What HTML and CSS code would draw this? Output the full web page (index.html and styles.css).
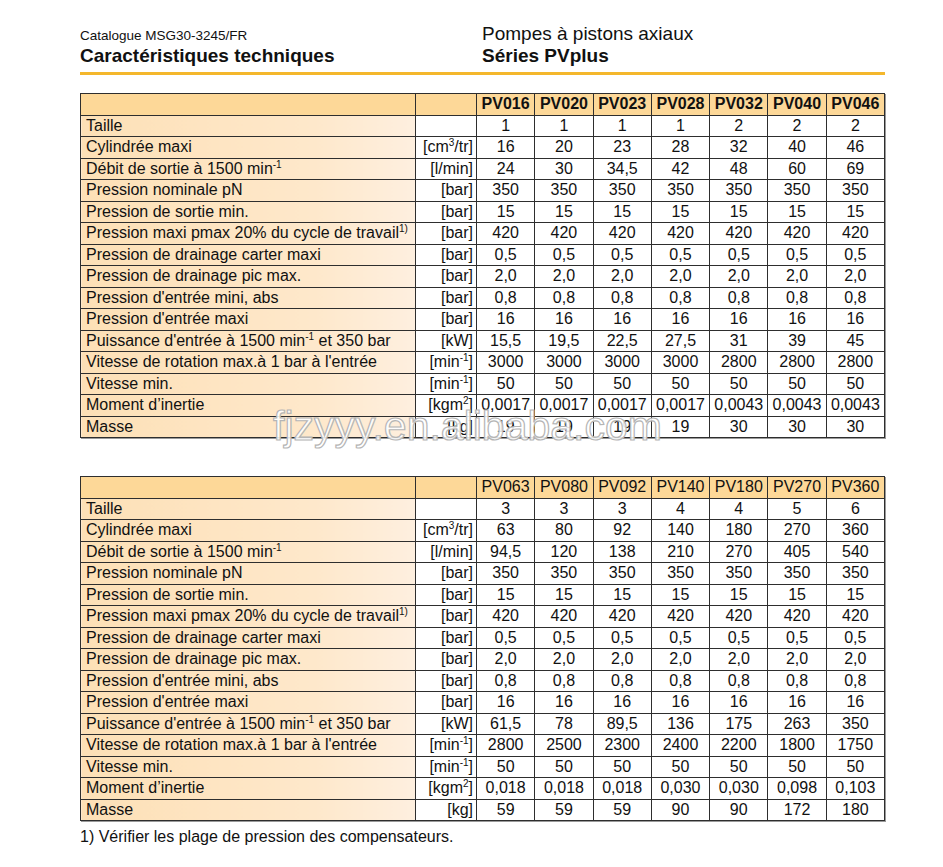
FILE: index.html
```html
<!DOCTYPE html>
<html lang="fr">
<head>
<meta charset="utf-8">
<title>Caractéristiques techniques</title>
<link rel="stylesheet" href="styles.css">
</head>
<body>
<div class="page">
  <header class="head">
    <div class="cat">Catalogue MSG30-3245/FR</div>
    <div class="sub">Pompes à pistons axiaux</div>
    <div class="title">Caractéristiques techniques</div>
    <div class="title">Séries PVplus</div>
  </header>

  <div class="tablewrap">
    <table class="spec bold-head">
      <colgroup><col class="c-label"><col class="c-unit"><col><col><col><col><col><col><col></colgroup>
      <thead>
        <tr><th class="label"></th><th class="unit"></th><th>PV016</th><th>PV020</th><th>PV023</th><th>PV028</th><th>PV032</th><th>PV040</th><th>PV046</th></tr>
      </thead>
      <tbody>
        <tr><td class="label">Taille</td><td class="unit"></td><td>1</td><td>1</td><td>1</td><td>1</td><td>2</td><td>2</td><td>2</td></tr>
        <tr><td class="label">Cylindrée maxi</td><td class="unit">[cm<sup>3</sup>/tr]</td><td>16</td><td>20</td><td>23</td><td>28</td><td>32</td><td>40</td><td>46</td></tr>
        <tr><td class="label">Débit de sortie à 1500 min<sup>-1</sup></td><td class="unit">[l/min]</td><td>24</td><td>30</td><td>34,5</td><td>42</td><td>48</td><td>60</td><td>69</td></tr>
        <tr><td class="label">Pression nominale pN</td><td class="unit">[bar]</td><td>350</td><td>350</td><td>350</td><td>350</td><td>350</td><td>350</td><td>350</td></tr>
        <tr><td class="label">Pression de sortie min.</td><td class="unit">[bar]</td><td>15</td><td>15</td><td>15</td><td>15</td><td>15</td><td>15</td><td>15</td></tr>
        <tr><td class="label">Pression maxi pmax 20% du cycle de travail<sup>1)</sup></td><td class="unit">[bar]</td><td>420</td><td>420</td><td>420</td><td>420</td><td>420</td><td>420</td><td>420</td></tr>
        <tr><td class="label">Pression de drainage carter maxi</td><td class="unit">[bar]</td><td>0,5</td><td>0,5</td><td>0,5</td><td>0,5</td><td>0,5</td><td>0,5</td><td>0,5</td></tr>
        <tr><td class="label">Pression de drainage pic max.</td><td class="unit">[bar]</td><td>2,0</td><td>2,0</td><td>2,0</td><td>2,0</td><td>2,0</td><td>2,0</td><td>2,0</td></tr>
        <tr><td class="label">Pression d'entrée mini, abs</td><td class="unit">[bar]</td><td>0,8</td><td>0,8</td><td>0,8</td><td>0,8</td><td>0,8</td><td>0,8</td><td>0,8</td></tr>
        <tr><td class="label">Pression d'entrée maxi</td><td class="unit">[bar]</td><td>16</td><td>16</td><td>16</td><td>16</td><td>16</td><td>16</td><td>16</td></tr>
        <tr><td class="label">Puissance d'entrée à 1500 min<sup>-1</sup> et 350 bar</td><td class="unit">[kW]</td><td>15,5</td><td>19,5</td><td>22,5</td><td>27,5</td><td>31</td><td>39</td><td>45</td></tr>
        <tr><td class="label">Vitesse de rotation max.à 1 bar à l'entrée</td><td class="unit">[min<sup>-1</sup>]</td><td>3000</td><td>3000</td><td>3000</td><td>3000</td><td>2800</td><td>2800</td><td>2800</td></tr>
        <tr><td class="label">Vitesse min.</td><td class="unit">[min<sup>-1</sup>]</td><td>50</td><td>50</td><td>50</td><td>50</td><td>50</td><td>50</td><td>50</td></tr>
        <tr><td class="label">Moment d’inertie</td><td class="unit">[kgm<sup>2</sup>]</td><td>0,0017</td><td>0,0017</td><td>0,0017</td><td>0,0017</td><td>0,0043</td><td>0,0043</td><td>0,0043</td></tr>
        <tr><td class="label">Masse</td><td class="unit">[kg]</td><td>19</td><td>19</td><td>19</td><td>19</td><td>30</td><td>30</td><td>30</td></tr>
      </tbody>
    </table>
    <div class="watermark">fjzyyy.en.alibaba.com</div>
  </div>

  <div class="tablewrap second">
    <table class="spec">
      <colgroup><col class="c-label"><col class="c-unit"><col><col><col><col><col><col><col></colgroup>
      <thead>
        <tr><th class="label"></th><th class="unit"></th><th>PV063</th><th>PV080</th><th>PV092</th><th>PV140</th><th>PV180</th><th>PV270</th><th>PV360</th></tr>
      </thead>
      <tbody>
        <tr><td class="label">Taille</td><td class="unit"></td><td>3</td><td>3</td><td>3</td><td>4</td><td>4</td><td>5</td><td>6</td></tr>
        <tr><td class="label">Cylindrée maxi</td><td class="unit">[cm<sup>3</sup>/tr]</td><td>63</td><td>80</td><td>92</td><td>140</td><td>180</td><td>270</td><td>360</td></tr>
        <tr><td class="label">Débit de sortie à 1500 min<sup>-1</sup></td><td class="unit">[l/min]</td><td>94,5</td><td>120</td><td>138</td><td>210</td><td>270</td><td>405</td><td>540</td></tr>
        <tr><td class="label">Pression nominale pN</td><td class="unit">[bar]</td><td>350</td><td>350</td><td>350</td><td>350</td><td>350</td><td>350</td><td>350</td></tr>
        <tr><td class="label">Pression de sortie min.</td><td class="unit">[bar]</td><td>15</td><td>15</td><td>15</td><td>15</td><td>15</td><td>15</td><td>15</td></tr>
        <tr><td class="label">Pression maxi pmax 20% du cycle de travail<sup>1)</sup></td><td class="unit">[bar]</td><td>420</td><td>420</td><td>420</td><td>420</td><td>420</td><td>420</td><td>420</td></tr>
        <tr><td class="label">Pression de drainage carter maxi</td><td class="unit">[bar]</td><td>0,5</td><td>0,5</td><td>0,5</td><td>0,5</td><td>0,5</td><td>0,5</td><td>0,5</td></tr>
        <tr><td class="label">Pression de drainage pic max.</td><td class="unit">[bar]</td><td>2,0</td><td>2,0</td><td>2,0</td><td>2,0</td><td>2,0</td><td>2,0</td><td>2,0</td></tr>
        <tr><td class="label">Pression d'entrée mini, abs</td><td class="unit">[bar]</td><td>0,8</td><td>0,8</td><td>0,8</td><td>0,8</td><td>0,8</td><td>0,8</td><td>0,8</td></tr>
        <tr><td class="label">Pression d'entrée maxi</td><td class="unit">[bar]</td><td>16</td><td>16</td><td>16</td><td>16</td><td>16</td><td>16</td><td>16</td></tr>
        <tr><td class="label">Puissance d'entrée à 1500 min<sup>-1</sup> et 350 bar</td><td class="unit">[kW]</td><td>61,5</td><td>78</td><td>89,5</td><td>136</td><td>175</td><td>263</td><td>350</td></tr>
        <tr><td class="label">Vitesse de rotation max.à 1 bar à l'entrée</td><td class="unit">[min<sup>-1</sup>]</td><td>2800</td><td>2500</td><td>2300</td><td>2400</td><td>2200</td><td>1800</td><td>1750</td></tr>
        <tr><td class="label">Vitesse min.</td><td class="unit">[min<sup>-1</sup>]</td><td>50</td><td>50</td><td>50</td><td>50</td><td>50</td><td>50</td><td>50</td></tr>
        <tr><td class="label">Moment d’inertie</td><td class="unit">[kgm<sup>2</sup>]</td><td>0,018</td><td>0,018</td><td>0,018</td><td>0,030</td><td>0,030</td><td>0,098</td><td>0,103</td></tr>
        <tr><td class="label">Masse</td><td class="unit">[kg]</td><td>59</td><td>59</td><td>59</td><td>90</td><td>90</td><td>172</td><td>180</td></tr>
      </tbody>
    </table>
  </div>

  <p class="note">1) Vérifier les plage de pression des compensateurs.</p>
</div>
</body>
</html>
```

FILE: styles.css
```css
* { box-sizing: border-box; }

body {
  margin: 0;
  background: #ffffff;
  color: #111111;
  font-family: "Liberation Sans", Arial, sans-serif;
}

.page {
  width: 943px;
  padding: 24px 0 0 80px;
}

.head {
  display: grid;
  grid-template-columns: 402px 403px;
  align-items: baseline;
  width: 805px;
  padding-bottom: 6px;
  border-bottom: 3px solid #f4b72c;
}

.cat {
  font-size: 13.5px;
  line-height: 20px;
}

.sub {
  font-size: 19px;
  line-height: 20px;
}

.title {
  font-size: 19px;
  line-height: 20px;
  font-weight: bold;
}

.tablewrap {
  position: relative;
  width: 805px;
  margin-top: 18px;
}

.tablewrap.second {
  margin-top: 38px;
}

.spec {
  width: 805px;
  table-layout: fixed;
  border-collapse: collapse;
  font-size: 16px;
  box-shadow: 1px 1px 0 #9a9a9a;
}

.c-label { width: 335px; }
.c-unit { width: 61px; }

.spec tr { height: 21.5px; }

.spec th,
.spec td {
  border: 1px solid #2e2e2e;
  padding: 0;
  line-height: 18px;
  text-align: center;
  white-space: nowrap;
  vertical-align: middle;
}

.spec thead th {
  background: #fdd898;
  font-weight: normal;
}

.spec.bold-head thead th {
  font-weight: bold;
}

.spec td.label {
  text-align: left;
  padding-left: 5px;
  background: linear-gradient(to right, #fde0b6, #fee8cb 70%, #feefdf);
}

.spec td.unit {
  text-align: right;
  padding-right: 3px;
}

.spec sup {
  font-size: 10px;
  line-height: 0;
  vertical-align: 6px;
}

.watermark {
  position: absolute;
  left: 193px;
  top: 312px;
  font-size: 41px;
  line-height: 42px;
  letter-spacing: 0;
  color: rgba(255, 255, 255, 0.88);
  -webkit-text-stroke: 1.2px #b5b5b5;
  pointer-events: none;
  white-space: nowrap;
}

.note {
  margin: 7px 0 0 0;
  font-size: 16px;
  line-height: 18px;
}
```
